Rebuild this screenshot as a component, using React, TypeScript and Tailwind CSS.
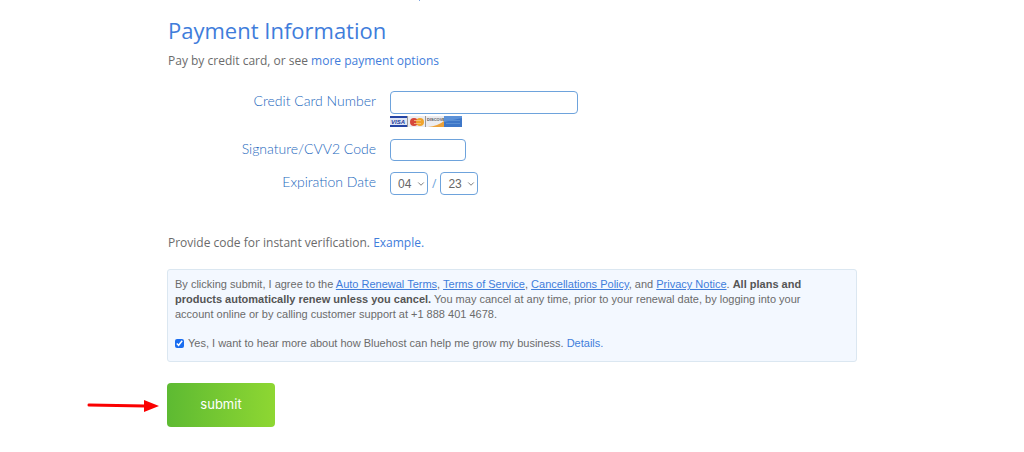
import type { ReactNode } from "react";
import { ChevronDown } from "lucide-react";

interface FieldRowProps {
  id: string;
  label: string;
  children: ReactNode;
}

function FieldRow({ id, label, children }: FieldRowProps) {
  return (
    <div className="flex items-start gap-[14px]">
      <label
        htmlFor={id}
        className="w-[209px] shrink-0 text-right font-['Lato',sans-serif] text-[14px] leading-5 font-light text-[#2468bd]"
      >
        {label}
      </label>
      <div>{children}</div>
    </div>
  );
}

interface DateSelectProps {
  id: string;
  label: string;
  options: string[];
  value: string;
}

function DateSelect({ id, label, options, value }: DateSelectProps) {
  return (
    <div className="relative">
      <select
        id={id}
        aria-label={label}
        defaultValue={value}
        className="block h-[23px] w-[38px] appearance-none rounded border border-[#6ea3dc] bg-white pl-[7px] font-['Liberation_Sans',Arial,sans-serif] text-[12px] text-[#666]"
      >
        {options.map((option) => (
          <option key={option}>{option}</option>
        ))}
      </select>
      <ChevronDown
        size={10}
        className="pointer-events-none absolute top-[7px] right-0.5 text-[#666]"
      />
    </div>
  );
}

function CardLogos() {
  return (
    <svg width="72" height="11" viewBox="0 0 72 11" role="img" aria-label="Accepted cards">
      <rect width="72" height="11" fill="#ececf0" />
      <rect width="17" height="11" fill="#dfe5f5" />
      <rect width="17" height="2" fill="#2545a5" />
      <rect y="9" width="17" height="2" fill="#2545a5" />
      <text x="1" y="8" fontSize="6" fontWeight="bold" fontStyle="italic" fontFamily="Liberation Sans" fill="#1d3c9c">
        VISA
      </text>
      <rect x="17" width="1" height="11" fill="#999" />
      <circle cx="24" cy="6" r="4" fill="#d6473a" />
      <circle cx="30" cy="6" r="4" fill="#f0a42c" />
      <path d="M24 4.5h7M24 7.5h7" stroke="#f5c78a" strokeWidth="0.8" />
      <rect x="35" width="1" height="11" fill="#999" />
      <path d="M38 11h16V5q-6 5-16 6z" fill="#eda23a" />
      <text x="37" y="5" fontSize="4" fontWeight="bold" fontFamily="Liberation Sans" fill="#555">
        DISCOVER
      </text>
      <rect x="54" width="18" height="11" fill="#3e77c8" />
      <path d="M54 0h18v2l-18 4z" fill="#5d92d8" />
      <path d="M56 4.5h14M56 7.5h14" stroke="#5b90d4" strokeWidth="1" />
    </svg>
  );
}

const months = ["01", "02", "03", "04", "05", "06", "07", "08", "09", "10", "11", "12"];
const years = ["23", "24", "25", "26", "27", "28"];

const termsLink = "text-[#3f7ddb] underline";
const inputStyle = "block rounded border border-[#6ea3dc] bg-white px-2 text-[12px] text-[#555]";

export default function App() {
  return (
    <main className="min-h-screen overflow-hidden bg-white font-['Open_Sans',sans-serif] text-[#6b6b6b]">
      <form className="mx-auto max-w-[690px] pb-6" onSubmit={(e) => e.preventDefault()}>
        <div className="ml-[252px] h-px w-px bg-[#7ea6e3]" />
        <h1 className="mt-3.5 pl-px text-[22px] leading-[30px] text-[#3f7ddb]">Payment Information</h1>
        <p className="mt-[7px] pl-px text-[12px] leading-[18px]">
          Pay by credit card, or see{" "}
          <a href="#options" className="text-[#3f7ddb]">
            more payment options
          </a>
        </p>

        <div className="mt-[21px] flex flex-col gap-[11px]">
          <FieldRow id="card-number" label="Credit Card Number">
            <input id="card-number" type="text" className={`${inputStyle} h-[23px] w-[188px]`} />
            <div className="mt-0.5 flex pb-px">
              <CardLogos />
            </div>
          </FieldRow>
          <FieldRow id="cvv" label="Signature/CVV2 Code">
            <input id="cvv" type="text" className={`${inputStyle} h-[22px] w-[76px]`} />
          </FieldRow>
          <FieldRow id="exp-month" label="Expiration Date">
            <div className="flex items-center gap-1 text-[12px] text-[#6ea3dc]">
              <DateSelect id="exp-month" label="Expiration month" options={months} value="04" />
              /
              <DateSelect id="exp-year" label="Expiration year" options={years} value="23" />
            </div>
          </FieldRow>
        </div>

        <p className="mt-[39px] pl-px text-[12px] leading-[18px]">
          Provide code for instant verification.{" "}
          <a href="#example" className="text-[#3f7ddb]">
            Example.
          </a>
        </p>

        <section className="mt-[17px] rounded-[3px] border border-[#dbe7f1] bg-[#f3f8ff] px-[7px] pt-[7px] pb-[10px] font-['Liberation_Sans',Arial,sans-serif] text-[11px] leading-[15px]">
          <p className="pr-8">
            By clicking submit, I agree to the{" "}
            <a href="#renewal" className={termsLink}>Auto Renewal Terms</a>,{" "}
            <a href="#terms" className={termsLink}>Terms of Service</a>,{" "}
            <a href="#cancellations" className={termsLink}>Cancellations Policy</a>, and{" "}
            <a href="#privacy" className={termsLink}>Privacy Notice</a>.{" "}
            <strong className="text-[#555]">
              All plans and products automatically renew unless you cancel.
            </strong>{" "}
            You may cancel at any time, prior to your renewal date, by logging into your account
            online or by calling customer support at +1 888 401 4678.
          </p>
          <div className="mt-3.5 flex items-center">
            <input id="news" type="checkbox" defaultChecked className="mr-1 size-[9px] accent-[#1a6df0]" />
            <label htmlFor="news">
              Yes, I want to hear more about how Bluehost can help me grow my business.
            </label>
            <a href="#details" className="ml-[3px] text-[#3f7ddb]">
              Details.
            </a>
          </div>
        </section>

        <div className="relative mt-[21px] w-fit">
          <svg
            width="72"
            height="14"
            viewBox="0 0 72 14"
            className="absolute top-4 right-full mr-2"
            aria-hidden="true"
          >
            <path d="M2 6l56 1" stroke="#fa0000" strokeWidth="3" strokeLinecap="round" />
            <path d="M57 1v12l15-6z" fill="#fa0000" />
          </svg>
          <button
            type="submit"
            className="block h-11 w-[108px] rounded-sm bg-linear-to-r from-[#5dba32] to-[#8ed732] font-['Inter',sans-serif] text-[13px] text-white"
          >
            submit
          </button>
        </div>
      </form>
    </main>
  );
}
